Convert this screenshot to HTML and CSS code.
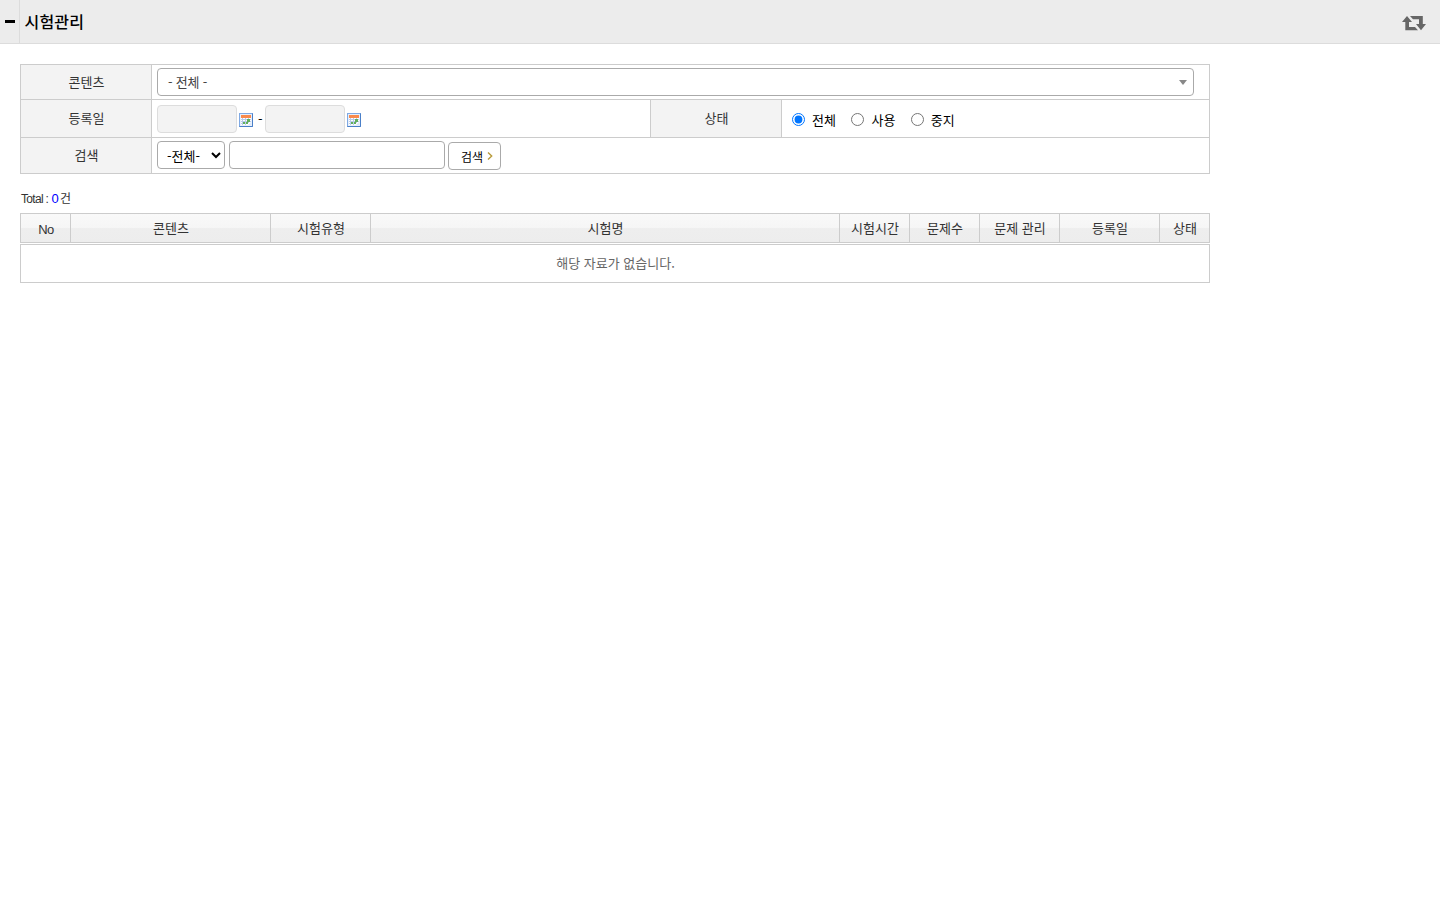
FILE: index.html
```html
<!DOCTYPE html>
<html lang="ko">
<head>
  <meta charset="utf-8">
  <title>시험관리</title>
  <link rel="stylesheet" href="styles.css">
</head>
<body>
  <div class="header">
    <div class="menu-toggle"><span class="minus"></span></div>
    <h1>시험관리</h1>
    <svg class="refresh" width="24" height="16" viewBox="0 0 24 16">
      <path fill="#666" d="M5 0 L10 6 H7 V11 H13 L16 14.300 H3.300 V6 H0 Z"/>
      <path fill="#666" d="M8 0 H20.800 V8 H24 L19 14.300 L14 8 H17 V3.300 H11 Z"/>
    </svg>
  </div>

  <div class="content">
    <form class="search">
      <div class="row row-contents">
        <div class="th">콘텐츠</div>
        <div class="td"><div class="combo"><span>- 전체 -</span><i class="arrow"></i></div></div>
      </div>
      <div class="row row-date">
        <div class="th">등록일</div>
        <div class="td">
          <input type="text" class="date" disabled>
          <svg class="cal" width="14" height="14" viewBox="0 0 14 14"><use href="#calendar"/></svg>
          <span class="dash">-</span>
          <input type="text" class="date" disabled>
          <svg class="cal" width="14" height="14" viewBox="0 0 14 14"><use href="#calendar"/></svg>
        </div>
        <div class="th th-state">상태</div>
        <div class="td radios">
          <label><input type="radio" name="state" checked>전체</label>
          <label><input type="radio" name="state">사용</label>
          <label><input type="radio" name="state">중지</label>
        </div>
      </div>
      <div class="row row-search">
        <div class="th">검색</div>
        <div class="td">
          <select class="kind"><option>-전체-</option></select>
          <input type="text" class="keyword">
          <button type="button" class="btn">검색
            <svg width="6" height="8" viewBox="0 0 6 8"><path d="M1 .5 L4.700 4 L1 7.500" fill="none" stroke="#b89a3a" stroke-width="1.400"/></svg>
          </button>
        </div>
      </div>
    </form>

    <p class="total"><span class="label">Total :</span> <span class="count">0</span> <span class="unit">건</span></p>

    <div class="list-head">
      <div class="no">No</div>
      <div>콘텐츠</div>
      <div>시험유형</div>
      <div>시험명</div>
      <div>시험시간</div>
      <div>문제수</div>
      <div>문제 관리</div>
      <div>등록일</div>
      <div>상태</div>
    </div>
    <div class="list-empty">해당 자료가 없습니다.</div>
  </div>

  <svg class="defs" width="0" height="0">
    <symbol id="calendar" viewBox="0 0 14 14">
      <rect x=".5" y=".5" width="13" height="13" fill="#e6effb" stroke="#7fa9e3"/>
      <path d="M.5 13.500 H13.500 V.5" fill="none" stroke="#4a7fc8"/>
      <rect x="2" y="2" width="10" height="3" fill="#f98a4c"/>
      <rect x="2" y="5" width="10" height="7" fill="#fff"/>
      <path fill="#b9cbea" d="M2 6h10v1H2zM2 8h10v1H2zM2 10h7v1H2zM3 5h1v7H3zM6 5h1v7H6zM9 5h1v5H9z"/>
      <path fill="#62b05c" d="M8 6h3v3H8zM4 9h2v2H4zM7 9h2v2H7z"/>
      <path fill="#dce8f8" d="M9 12 L12 9 V12 Z"/>
    </symbol>
  </svg>
</body>
</html>
```

FILE: styles.css
```css
* {
  box-sizing: border-box;
}
body {
  margin: 0;
  background: #fff;
  color: #333;
  font-family: "Noto Sans CJK KR", sans-serif;
  font-size: 13px;
  line-height: 18px;
}
input, select, button {
  margin: 0;
  font-family: inherit;
  font-size: 13px;
}

/* header */
.header {
  display: flex;
  align-items: center;
  height: 44px;
  padding-right: 14px;
  background: #ececec;
  border-bottom: 1px solid #dcdcdc;
}
.menu-toggle {
  display: flex;
  align-items: center;
  width: 20px;
  height: 43px;
  padding-left: 5px;
  border-right: 1px solid #dcdcdc;
}
.minus {
  width: 10px;
  height: 3px;
  background: #000;
}
.header h1 {
  flex: 1;
  margin: 0;
  padding: 0 0 2px 4.5px;
  color: #000;
  font-size: 16px;
  font-weight: 500;
  letter-spacing: 0.2px;
}
.refresh {
  margin-top: 4px;
}

/* search form */
.content {
  width: 1190px;
  margin: 20px 0 0 20px;
}
.search {
  border: 1px solid #ccc;
  border-bottom: 0;
}
.row {
  display: flex;
  border-bottom: 1px solid #ccc;
}
.row-contents {
  height: 35px;
}
.row-date {
  height: 38px;
}
.row-search {
  height: 36px;
}
.th {
  display: flex;
  flex: none;
  align-items: center;
  justify-content: center;
  width: 131px;
  padding-left: 1px;
  background: #f3f3f3;
  border-right: 1px solid #ccc;
}
.row-date .th, .row-search .th {
  padding-bottom: 1px;
}
.th-state {
  width: 132px;
  border-left: 1px solid #ccc;
}
.td {
  display: flex;
  flex: 1;
  align-items: center;
  padding-left: 5px;
}
.combo {
  display: flex;
  align-items: center;
  justify-content: space-between;
  width: 1037px;
  height: 28px;
  padding: 0 6px 0 10px;
  border: 1px solid #aaa;
  border-radius: 4px;
  color: #444;
}
.combo span {
  word-spacing: -0.5px;
}
.arrow {
  border: 4px solid transparent;
  border-top: 5px solid #888;
  border-bottom: 0;
}
.date, .keyword, .kind {
  height: 28px;
  border: 1px solid #aaa;
  border-radius: 4px;
  background: #fff;
}
.date {
  width: 80px;
  background: #f3f3f3;
  border-color: #ddd;
}
.row-date .td {
  padding-top: 1px;
}
.row-search .td {
  padding-bottom: 1px;
}
.cal {
  margin: 2px 0 0 2px;
}
.dash {
  width: 12px;
  padding-left: 5px;
  color: #000;
}
.row-date .radios {
  flex: none;
  width: 427px;
  padding: 3px 0 0 10px;
  color: #000;
}
.radios label {
  display: flex;
  align-items: center;
  margin-right: 15.5px;
}
.radios input {
  width: 13px;
  height: 13px;
  margin: -2px 7px 0 0;
}
.kind {
  width: 68px;
  padding-left: 5px;
  color: #000;
}
.keyword {
  width: 216px;
  margin-left: 4px;
}
.btn {
  display: flex;
  align-items: center;
  gap: 4px;
  width: 53px;
  height: 28px;
  margin: 2px 0 0 3px;
  padding: 0 0 0 12px;
  background: #fff;
  border: 1px solid #aaa;
  border-radius: 4px;
  color: #000;
  font-size: 12px;
}

/* list */
.total {
  margin: 15px 0 5px 1px;
  font-size: 12px;
}
.total .label, .total .count {
  font-family: "Liberation Sans", sans-serif;
  letter-spacing: -0.7px;
}
.total .count {
  color: #00f;
  font-size: 13px;
}
.total .unit {
  margin-left: -1.5px;
}
.list-head {
  display: grid;
  grid-template-columns: 50px 200px 100px 469px 70px 70px 80px 100px 50px;
  height: 30px;
  border: 1px solid #ccc;
  border-left: 0;
  background: linear-gradient(#f9f9f9, #f6f6f6 48%, #eee 52%, #ededed);
}
.list-head div {
  display: flex;
  align-items: center;
  justify-content: center;
  padding-left: 1px;
  border-left: 1px solid #ccc;
}
.list-head .no {
  padding-top: 3px;
  font-family: "Liberation Sans", sans-serif;
  letter-spacing: -0.5px;
}
.list-empty {
  height: 39px;
  margin-top: 1px;
  padding-left: 1px;
  border: 1px solid #ccc;
  color: #666;
  line-height: 36px;
  text-align: center;
}
.defs {
  display: block;
}
```
